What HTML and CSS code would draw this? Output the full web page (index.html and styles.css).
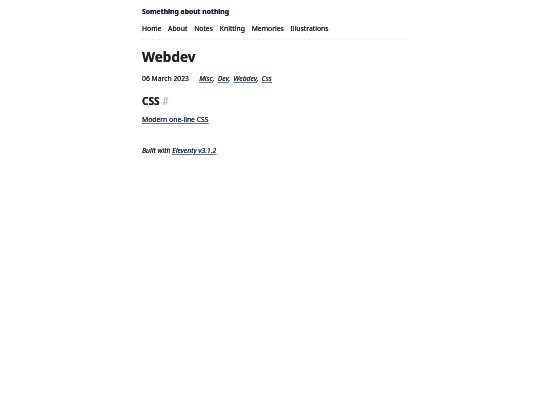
FILE: index.html
```html
<!DOCTYPE html>
<html lang="en">
<head>
<meta charset="utf-8">
<title>Webdev</title>
<link rel="stylesheet" href="styles.css">
</head>
<body>
<div class="page">
  <header class="site-header">
    <a class="home-link" href="#">Something about nothing</a>
    <nav class="nav">
      <a href="#">Home</a>
      <a href="#">About</a>
      <a href="#">Notes</a>
      <a href="#">Knitting</a>
      <a href="#">Memories</a>
      <a href="#">Illustrations</a>
    </nav>
  </header>
  <main class="content">
    <h1 class="title">Webdev</h1>
    <ul class="meta">
      <li class="date">06 March 2023</li>
      <li class="tag"><a href="#">Misc</a>,</li>
      <li class="tag"><a href="#">Dev</a>,</li>
      <li class="tag"><a href="#">Webdev</a>,</li>
      <li class="tag"><a href="#">Css</a></li>
    </ul>
    <h2 class="section">CSS <span class="anchor">#</span></h2>
    <ul class="posts">
      <li><a href="#">Modern one-line CSS</a></li>
    </ul>
  </main>
  <footer class="footer">
    <em>Built with <a href="#">Eleventy v3.1.2</a></em>
  </footer>
</div>
</body>
</html>
```
FILE: styles.css
```css
html, body {
  margin: 0;
  padding: 0;
  background: #fff;
}
body {
  font-family: "Noto Sans", "Open Sans", sans-serif;
  font-size: 6.8px;
  line-height: 10px;
  color: #1c1c1c;
}
a {
  color: #15263c;
  text-decoration-color: #6a7585;
}
.page {
  width: 264px;
  margin: 0 auto;
  padding-left: 8px;
  will-change: transform;
  text-shadow: 0 0 0.3px currentColor;
}
.site-header {
  padding-top: 7px;
  padding-bottom: 5px;
  border-bottom: 1px dashed #ececec;
}
.home-link {
  display: block;
  font-weight: 700;
  color: #13233a;
  text-decoration: none;
}
.nav {
  display: flex;
  gap: 6.75px;
  margin-top: 7px;
}
.nav a {
  text-decoration: none;
  color: #1c1c1c;
}
.content {
  padding-top: 8px;
}
.title {
  font-size: 13.5px;
  font-weight: 700;
  margin: 0;
  line-height: 18px;
  color: #222;
}
.meta {
  display: flex;
  gap: 3.4px;
  list-style: none;
  padding: 0;
  margin: 8px 0 0;
}
.date {
  margin-right: 6.75px;
}
.tag {
  font-style: italic;
}
.section {
  font-size: 10.1px;
  font-weight: 700;
  margin: 10px 0 0;
  line-height: 14px;
  color: #222;
}
.anchor {
  color: #c0c0c0;
  font-weight: 400;
}
.posts {
  list-style: none;
  margin: 7px 0 0;
  padding: 0;
}
.footer {
  margin-top: 21px;
}
```
